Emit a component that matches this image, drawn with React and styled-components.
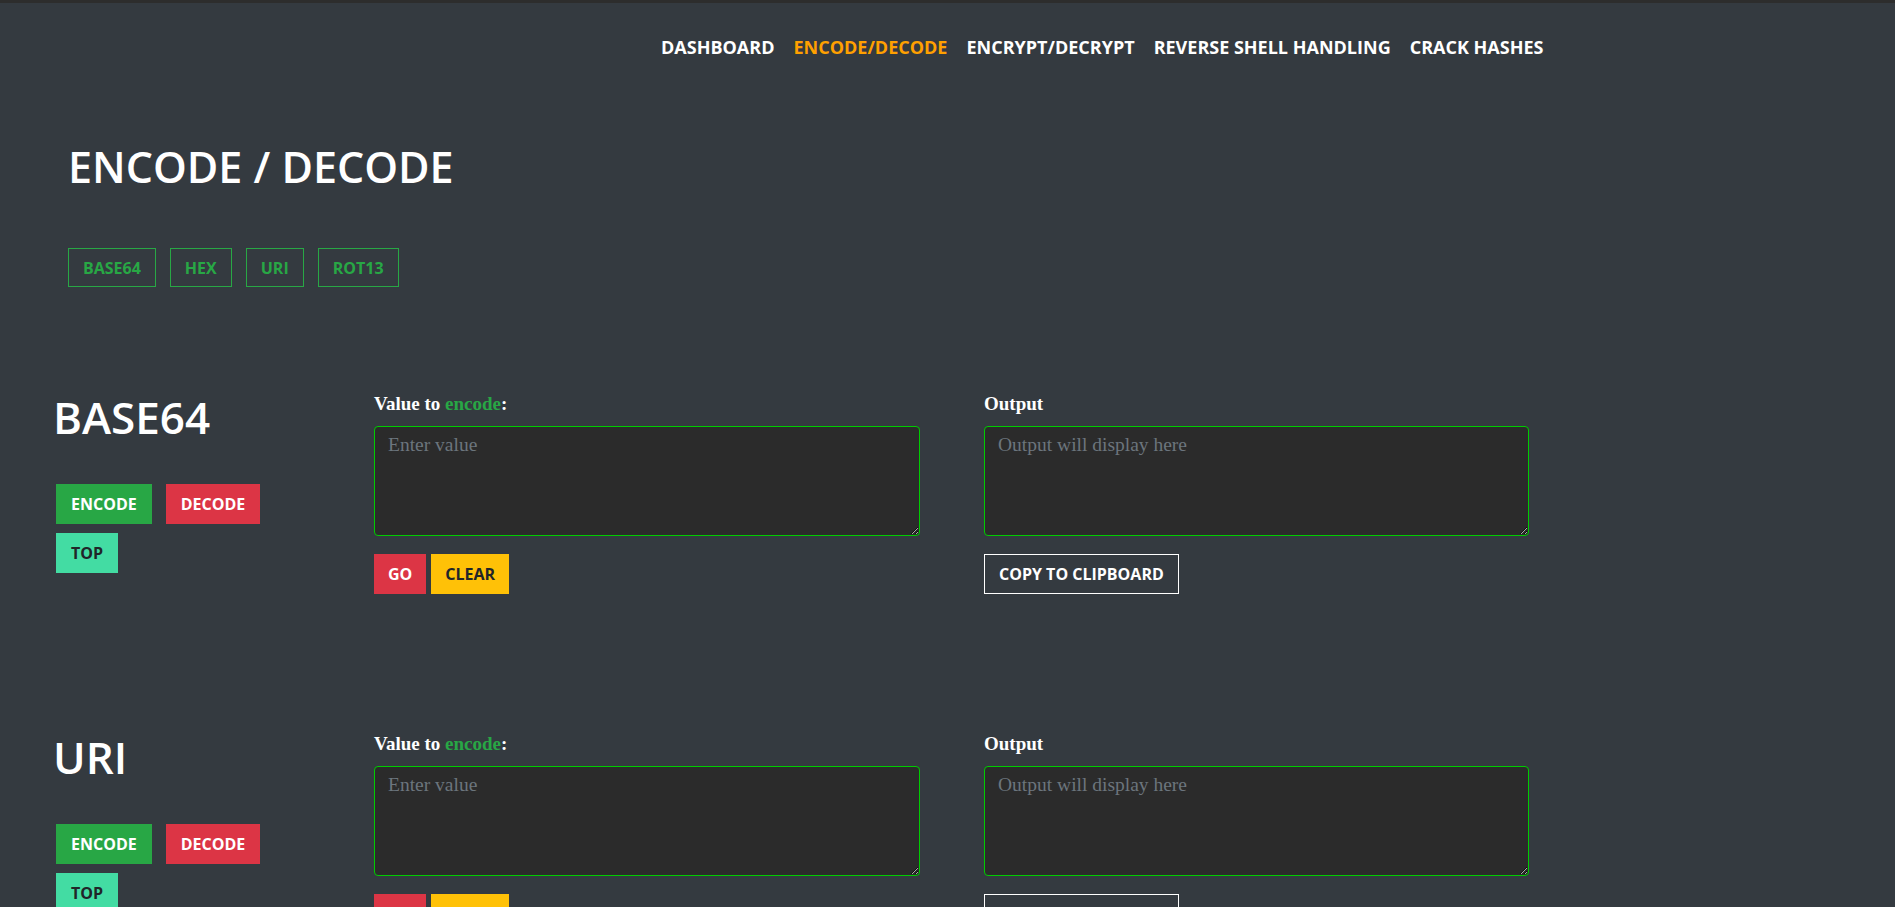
import React from "react";
import styled, { createGlobalStyle } from "styled-components";

const GlobalStyle = createGlobalStyle`
  html, body {
    margin: 0;
    padding: 0;
    background-color: #343a40;
  }
  body {
    font-family: "Open Sans", "Noto Sans", sans-serif;
    color: #ffffff;
  }
  * {
    box-sizing: border-box;
  }
`;

const NAV_LINKS = [
  "DASHBOARD",
  "ENCODE/DECODE",
  "ENCRYPT/DECRYPT",
  "REVERSE SHELL HANDLING",
  "CRACK HASHES",
];

const SECTIONS = ["BASE64", "URI", "HEX", "ROT13"];

function App() {
  return (
    <Page>
      <GlobalStyle />
      <Nav>
        {NAV_LINKS.map((link) => (
          <NavLink key={link} href="#" active={link === "ENCODE/DECODE"}>
            {link}
          </NavLink>
        ))}
      </Nav>

      <Header>
        <Title>ENCODE / DECODE</Title>
        <Tabs>
          <Tab href="#">BASE64</Tab>
          <Tab href="#">HEX</Tab>
          <Tab href="#">URI</Tab>
          <Tab href="#">ROT13</Tab>
        </Tabs>
      </Header>

      <main>
        {SECTIONS.map((name) => (
          <Section key={name}>
            <Side>
              <SectionTitle>{name}</SectionTitle>
              <ModeButtons>
                <Button bg="#28a745" fg="#ffffff">ENCODE</Button>
                <Button bg="#dc3545" fg="#ffffff">DECODE</Button>
                <Button bg="#43dca3" fg="#212529">TOP</Button>
              </ModeButtons>
            </Side>

            <Field>
              <Label>
                Value to <Mode>encode</Mode>:
              </Label>
              <TextArea placeholder="Enter value" />
              <Actions>
                <Button bg="#dc3545" fg="#ffffff" small>GO</Button>
                <Button bg="#ffc107" fg="#212529" small>CLEAR</Button>
              </Actions>
            </Field>

            <Field>
              <Label>Output</Label>
              <TextArea placeholder="Output will display here" readOnly />
              <Actions>
                <OutlineButton>COPY TO CLIPBOARD</OutlineButton>
              </Actions>
            </Field>
          </Section>
        ))}
      </main>
    </Page>
  );
}

const Page = styled.div`
  border-top: 3px solid #2d2d2d;
  min-height: 100vh;
`;

const Nav = styled.nav`
  display: flex;
  gap: 19px;
  padding: 32px 0 0 661px;
`;

const NavLink = styled.a`
  font-size: 18px;
  line-height: 24px;
  font-weight: 700;
  text-decoration: none;
  white-space: nowrap;
  color: ${(p) => (p.active ? "#ffa000" : "#ffffff")};
`;

const Header = styled.header`
  padding: 82px 0 0 68px;
`;

const Title = styled.h1`
  margin: 0;
  font-size: 43px;
  line-height: 52px;
  font-weight: 600;
  color: #ffffff;
`;

const Tabs = styled.div`
  display: flex;
  gap: 14px;
  margin-top: 55px;
`;

const Tab = styled.a`
  display: inline-flex;
  align-items: center;
  height: 39px;
  padding: 0 14px;
  border: 1px solid #28a745;
  color: #28a745;
  font-size: 16px;
  font-weight: 700;
  text-decoration: none;
`;

const Section = styled.section`
  display: grid;
  grid-template-columns: 256px 546px 545px;
  column-gap: 64px;
  align-items: start;
  padding-left: 54px;
  margin-top: 104px;

  & + & {
    margin-top: 137px;
  }
`;

const Side = styled.div`
  display: flex;
  flex-direction: column;
`;

const SectionTitle = styled.h2`
  margin: 0 0 0 -1px;
  font-size: 44px;
  line-height: 52px;
  font-weight: 600;
  color: #ffffff;
`;

const ModeButtons = styled.div`
  display: flex;
  flex-wrap: wrap;
  column-gap: 14px;
  row-gap: 9px;
  margin-top: 41px;
  padding-left: 2px;
`;

const Button = styled.button`
  display: inline-flex;
  align-items: center;
  justify-content: center;
  height: 40px;
  padding: 0 ${(p) => (p.small ? "14px" : "15px")};
  border: none;
  border-radius: 0;
  background-color: ${(p) => p.bg};
  color: ${(p) => p.fg};
  font-family: "Open Sans", "Noto Sans", sans-serif;
  font-size: 16px;
  font-weight: 700;
  cursor: pointer;
`;

const OutlineButton = styled(Button)`
  padding: 0 14px;
  background-color: transparent;
  color: #ffffff;
  border: 1px solid #ffffff;
`;

const Field = styled.div`
  display: flex;
  flex-direction: column;
`;

const Label = styled.label`
  font-family: "Liberation Serif", "DejaVu Serif", serif;
  font-size: 19px;
  line-height: 24px;
  font-weight: 700;
  color: #ffffff;
  margin-top: 1px;
`;

const Mode = styled.span`
  color: #28a745;
`;

const TextArea = styled.textarea`
  display: block;
  width: 100%;
  height: 110px;
  margin-top: 10px;
  padding: 4px 13px;
  background-color: #2b2b2b;
  border: 1px solid #00cc00;
  border-radius: 4px;
  color: #ffffff;
  font-family: "Liberation Serif", "DejaVu Serif", serif;
  font-size: 19.5px;
  line-height: 28px;
  outline: none;

  &::placeholder {
    color: #6c757d;
  }
`;

const Actions = styled.div`
  display: flex;
  gap: 5px;
  margin-top: 18px;
`;

export default App;
